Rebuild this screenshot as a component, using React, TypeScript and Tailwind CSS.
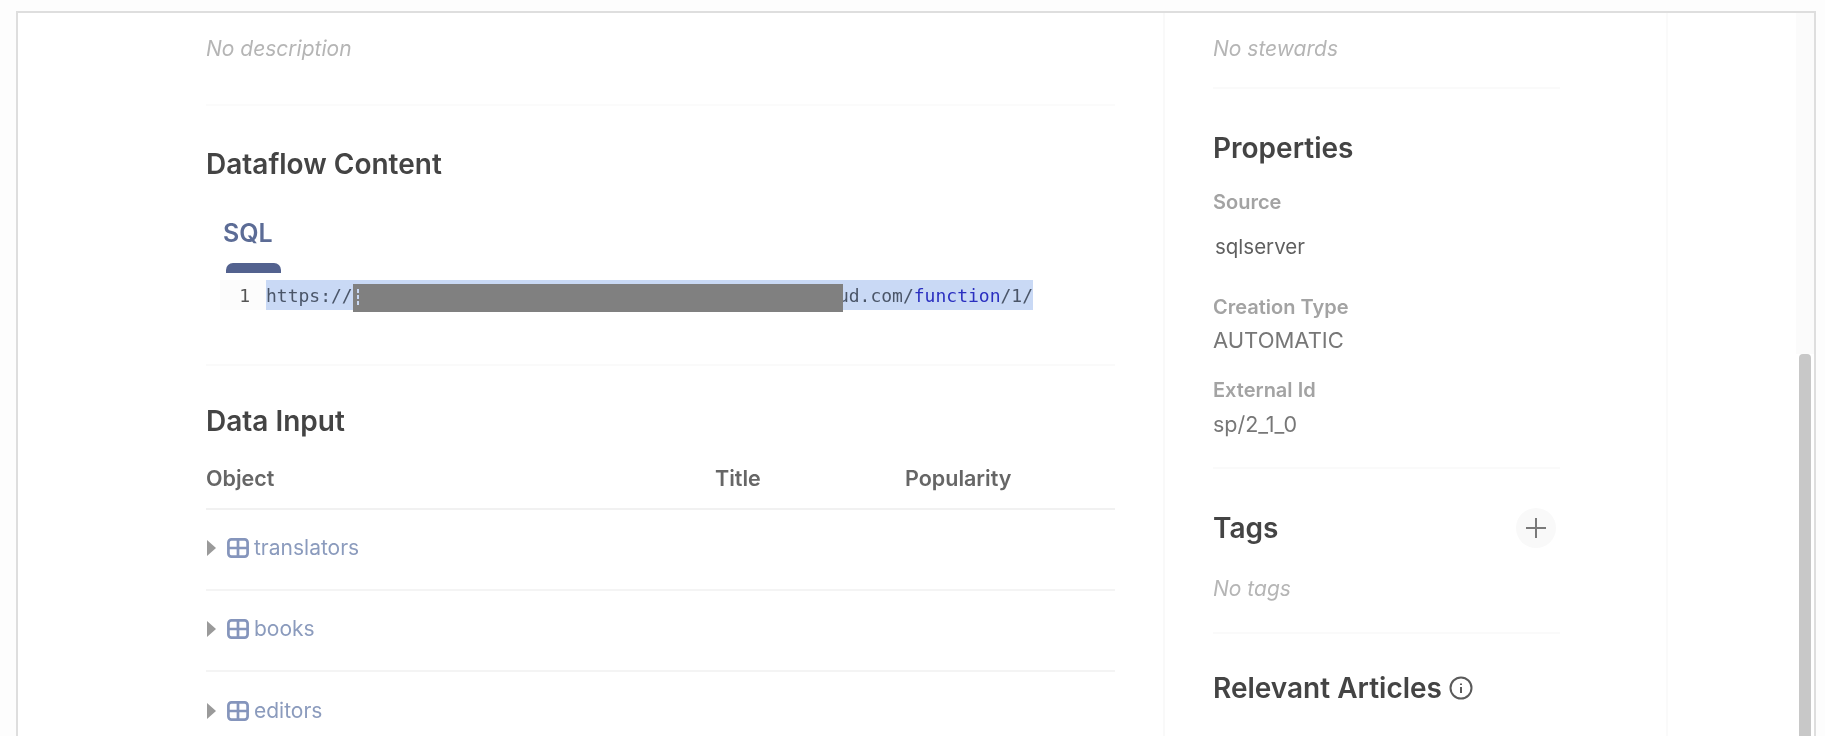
const sans = "font-['Inter','Liberation_Sans',sans-serif]";

function Divider({ className }: { className: string }) {
  return <div className={className} />;
}

function TableIcon() {
  return (
    <svg width="22" height="20" viewBox="0 0 22 20" fill="none" stroke="#8595bc" strokeWidth="2.7" className="shrink-0">
      <rect x="1.4" y="1.4" width="19.2" height="17.2" rx="3" />
      <path d="M1.4 10h19.2M11 1.4v17.2" />
    </svg>
  );
}

function Row({ name, last }: { name: string; last?: boolean }) {
  return (
    <div className={`flex h-[81px] items-center pb-[3px] ${last ? "" : "border-b-2 border-[#f4f4f4]"}`}>
      <svg width="9" height="16" viewBox="0 0 9 16" className="shrink-0 ml-[1px] mr-[11px]">
        <path d="M0 0l9 8-9 8z" fill="#9a9a9a" />
      </svg>
      <TableIcon />
      <span className="ml-[5px] text-[21px] text-[#8b9bbd]">{name}</span>
    </div>
  );
}

function Prop({ label, value, valueClass }: { label: string; value: string; valueClass: string }) {
  return (
    <div>
      <div className="text-[20px] leading-[24px] font-semibold text-[#a3a3a3]">{label}</div>
      <div className={valueClass}>{value}</div>
    </div>
  );
}

export default function App() {
  return (
    <div className={`h-[736px] w-[1825px] overflow-hidden bg-[#fdfdfd] pl-[16px] pr-[9px] pt-[11px] blur-[0.5px] ${sans}`}>
      <div className="relative flex h-[725px] overflow-hidden border-l-2 border-r-2 border-t-2 border-[#dedede] bg-white">
        <main className="w-[1147px] shrink-0 border-r-2 border-[#f9f9f9] pl-[188px] pr-[48px]">
          <p className="pt-[23px] text-[21px] leading-[26px] italic text-[#b5b5b5]">No description</p>
          <Divider className="mt-[42px] h-[2px] bg-[#fbfbfb]" />
          <h2 className="mt-[41px] text-[28px] leading-[34px] font-semibold text-[#444444]">Dataflow Content</h2>
          <div className="mt-[36px] ml-[17px] text-[25px] leading-[32px] font-semibold text-[#5c6c96]">SQL</div>
          <div className="mt-[14px] ml-[20px] h-[10px] w-[55px] rounded-t-[7px] bg-[#53628f]" />
          <div className="relative mt-[7px] flex h-[30px] items-center font-['DejaVu_Sans_Mono',monospace] text-[18px]">
            <span className="ml-[14px] flex h-full w-[46px] items-center justify-end bg-[#fcfcfc] pr-[16px] text-[#555555]">1</span>
            <span className="flex h-full w-[767px] items-center whitespace-pre bg-[#c9d9f5] text-[#4a5568]">
              <span>https://</span>
              <span className="w-[488px]" />
              <span>ud.com/</span>
              <span className="text-[#2a2fc0]">function</span>
              <span>/1/</span>
            </span>
            <div className="absolute left-[147px] top-[4px] h-[28px] w-[490px] bg-[#808080]" />
            <svg width="2" height="18" viewBox="0 0 2 18" className="absolute left-[151px] top-[9px]">
              <path d="M1 0v18" stroke="#c9d9f5" strokeWidth="2" strokeDasharray="4 2" />
            </svg>
          </div>
          <Divider className="mt-[54px] h-[2px] bg-[#fafafa]" />
          <h2 className="mt-[38px] text-[28px] leading-[34px] font-semibold text-[#444444]">Data Input</h2>
          <div className="mt-[28px] flex h-[44px] border-b-2 border-[#f1f1f1] text-[21.5px] font-semibold leading-[24px] text-[#666666]">
            <span className="w-[509px]">Object</span>
            <span className="w-[190px]">Title</span>
            <span>Popularity</span>
          </div>
          <Row name="translators" />
          <Row name="books" />
          <Row name="editors" last />
        </main>
        <aside className="w-[501px] shrink-0 pl-[48px] pr-[106px]">
          <p className="pt-[23px] text-[21px] leading-[26px] italic text-[#b5b5b5]">No stewards</p>
          <Divider className="mt-[25px] h-[2px] bg-[#fafafa]" />
          <h2 className="mt-[42px] text-[28px] leading-[34px] font-semibold text-[#444444]">Properties</h2>
          <div className="mt-[25px]">
            <Prop label="Source" value="sqlserver" valueClass="mt-[21px] ml-[2px] text-[20.5px] leading-[24px] text-[#5f5f5f]" />
          </div>
          <div className="mt-[36px]">
            <Prop label="Creation Type" value="AUTOMATIC" valueClass="mt-[9px] text-[22px] leading-[24px] text-[#777777]" />
          </div>
          <div className="mt-[26px]">
            <Prop label="External Id" value="sp/2_1_0" valueClass="mt-[10px] text-[21.5px] leading-[24px] text-[#777777]" />
          </div>
          <Divider className="mt-[31px] h-[2px] bg-[#fafafa]" />
          <div className="mt-[40px] flex h-[38px] items-center justify-between">
            <h2 className="text-[28px] leading-[34px] font-semibold text-[#444444]">Tags</h2>
            <div className="mr-[4px] flex h-[40px] w-[40px] items-center justify-center rounded-full bg-[#f9f9f9]">
              <svg width="20" height="20" viewBox="0 0 20 20" stroke="#7a7a7a" strokeWidth="2">
                <path d="M10 0v20M0 10h20" />
              </svg>
            </div>
          </div>
          <p className="mt-[29px] text-[21px] leading-[26px] italic text-[#b5b5b5]">No tags</p>
          <Divider className="mt-[30px] h-[2px] bg-[#fafafa]" />
          <div className="mt-[37px] flex items-center">
            <h2 className="text-[28px] leading-[34px] font-semibold text-[#444444]">Relevant Articles</h2>
            <svg width="24" height="24" viewBox="0 0 24 24" fill="none" stroke="#5a5a5a" strokeWidth="2" className="ml-[7px]">
              <circle cx="12" cy="12" r="10.5" />
              <path d="M12 7.5v1.6M12 11v6" />
            </svg>
          </div>
        </aside>
        <div className="flex-1 border-l-2 border-[#fafafa]" />
        <div className="absolute right-0 top-0 h-[341px] w-[18px] bg-[#fbfbfb]" />
        <div className="absolute right-[3px] top-[341px] h-[390px] w-[12px] rounded-t-[4px] bg-[#c8c8c8]" />
      </div>
    </div>
  );
}
